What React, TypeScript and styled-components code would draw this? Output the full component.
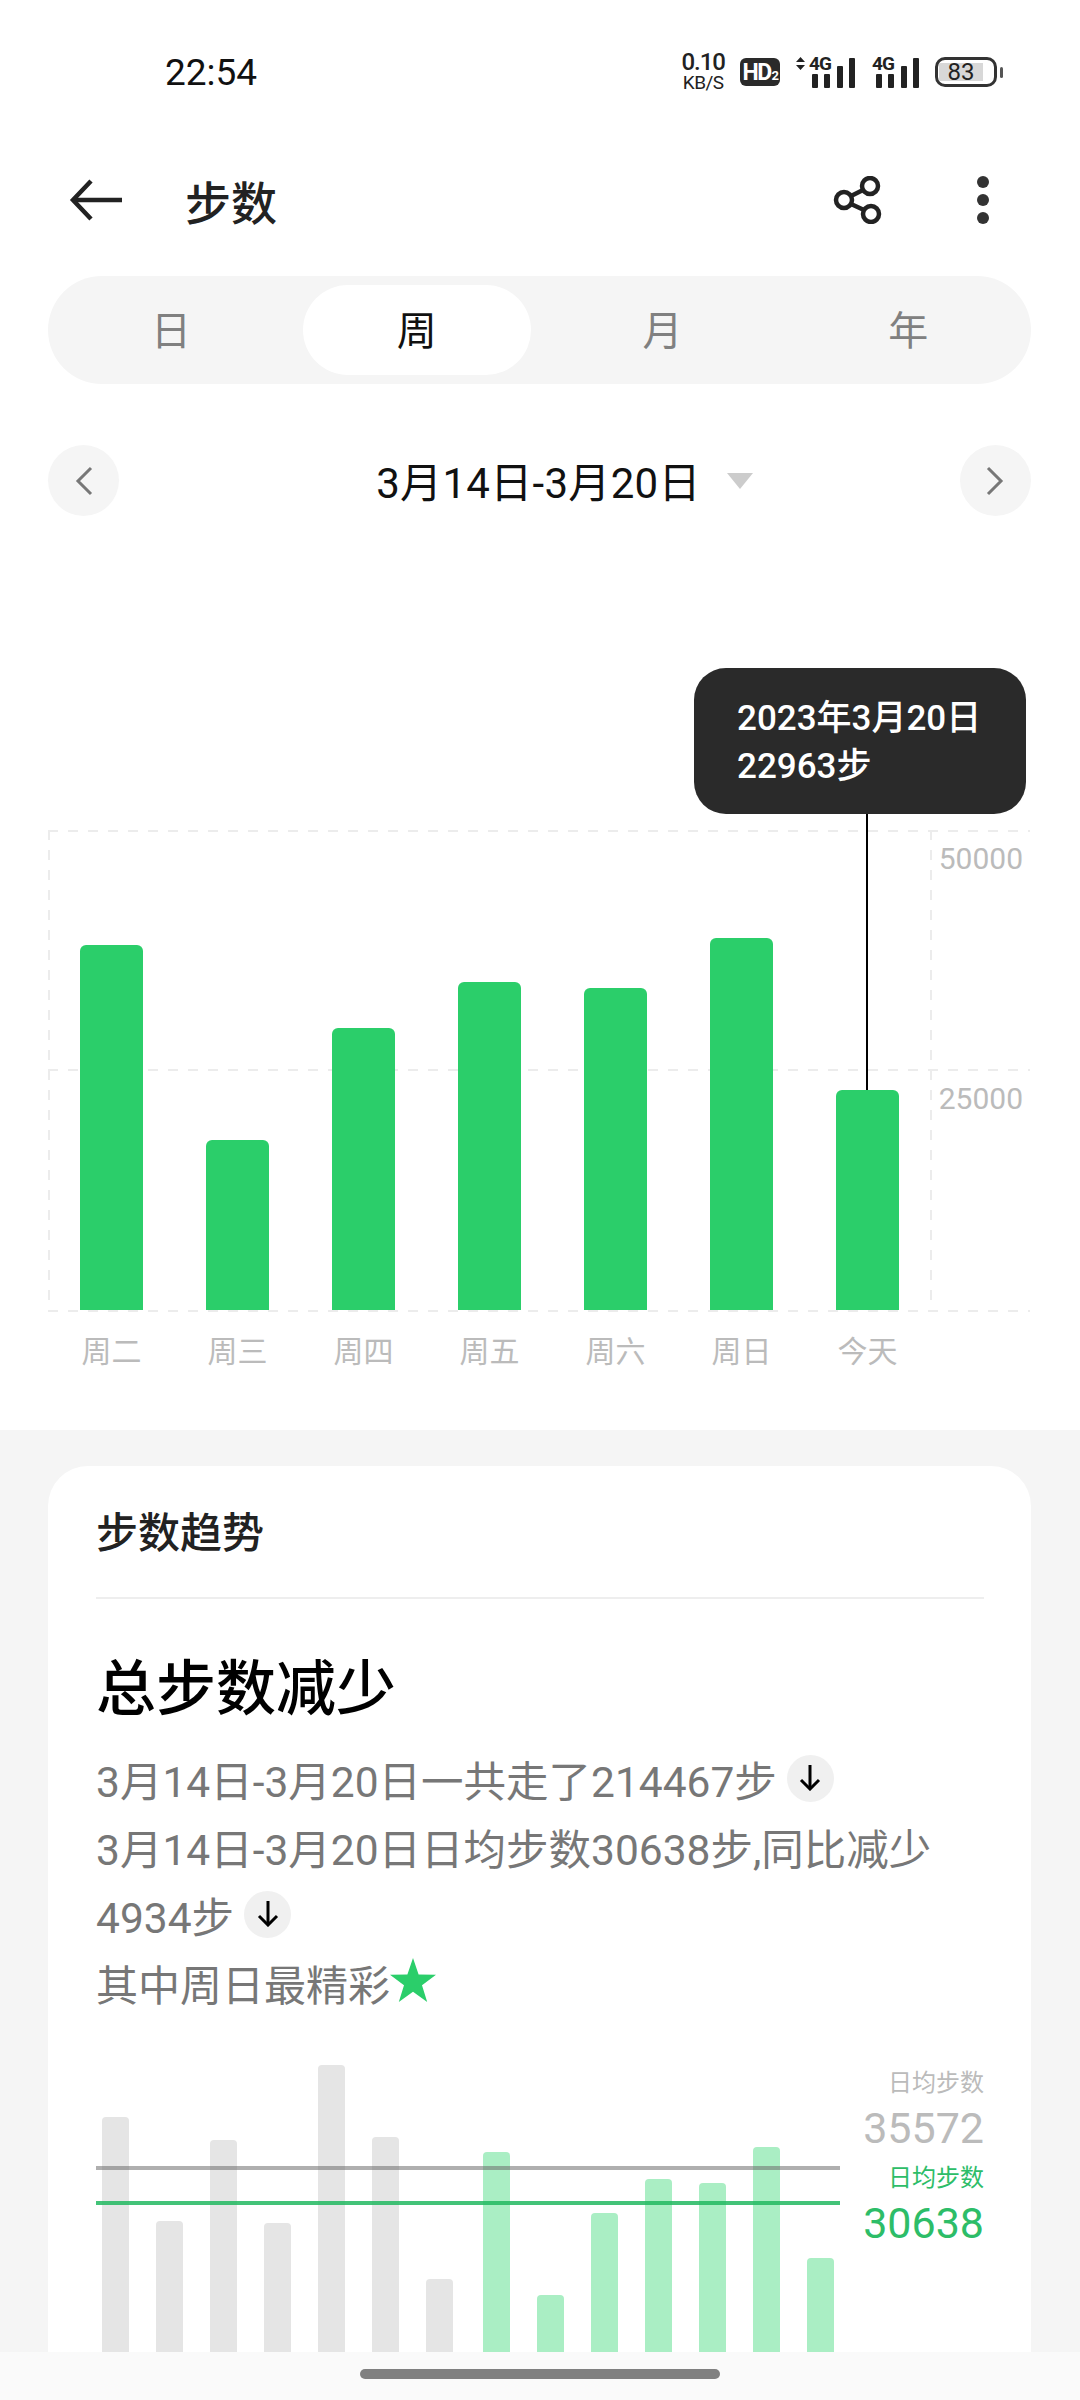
import styled, { createGlobalStyle } from "styled-components";

const GREEN = "#2bce6a";

const weekBars = [
  { label: "周二", height: 365 },
  { label: "周三", height: 170 },
  { label: "周四", height: 282 },
  { label: "周五", height: 328 },
  { label: "周六", height: 322 },
  { label: "周日", height: 372 },
  { label: "今天", height: 220 },
];
const lastWeek = [255, 151, 232, 149, 307, 235, 93];
const thisWeek = [220, 77, 159, 193, 189, 225, 114];

const SignalIcon = ({ arrows }: { arrows?: boolean }) => (
  <Signal $wide={arrows}>
    <svg width={arrows ? 62 : 48} height="32" viewBox={arrows ? "0 0 62 32" : "0 0 48 32"}>
      {arrows && <path d="M1 6 L5.5 1 L10 6 Z M1 9 L5.5 14 L10 9 Z" fill="#222" />}
      <g transform={arrows ? "translate(14 0)" : "translate(1 0)"}>
        <rect x="3" y="18" width="6" height="14" rx="1" fill="#222" />
        <rect x="15" y="18" width="6" height="14" rx="1" fill="#222" />
        <rect x="28" y="10" width="6" height="22" rx="1" fill="#222" />
        <rect x="40" y="2" width="6" height="30" rx="1" fill="#222" />
      </g>
    </svg>
    <SignalText $wide={arrows}>4G</SignalText>
  </Signal>
);

const BackIcon = () => (
  <svg width="54" height="42" viewBox="0 0 54 42" fill="none" stroke="#222" strokeWidth="4.5">
    <path d="M53 21 H4" />
    <path d="M22 2 L4 21 L22 40" />
  </svg>
);

const ShareIcon = () => (
  <svg width="52" height="48" viewBox="0 0 52 48" fill="none" stroke="#222" strokeWidth="4.5">
    <circle cx="38" cy="10" r="8" />
    <circle cx="12" cy="24" r="8" />
    <circle cx="39" cy="38" r="8" />
    <path d="M19 20 L31 14 M19 28 L32 34" />
  </svg>
);

const MoreIcon = () => (
  <svg width="14" height="50" viewBox="0 0 14 50" fill="#333">
    <circle cx="7" cy="7" r="6" />
    <circle cx="7" cy="25" r="6" />
    <circle cx="7" cy="43" r="6" />
  </svg>
);

const Chevron = ({ right }: { right?: boolean }) => (
  <svg width="18" height="30" viewBox="0 0 18 30" fill="none" stroke="#777" strokeWidth="3">
    <path d={right ? "M2 2 L15 15 L2 28" : "M16 2 L3 15 L16 28"} />
  </svg>
);

const DownArrow = () => (
  <svg width="22" height="26" viewBox="0 0 22 26" fill="none" stroke="#000" strokeWidth="3">
    <path d="M11 0 V24" />
    <path d="M2 15 L11 24 L20 15" />
  </svg>
);

const StarIcon = () => (
  <StarShape width="46" height="44" viewBox="0 0 46 44" fill={GREEN}>
    <path d="M23 0 L28.6 16.6 L46 16.8 L32 27.2 L37.2 44 L23 33.8 L8.8 44 L14 27.2 L0 16.8 L17.4 16.6 Z" />
  </StarShape>
);

const App = () => {
  return (
    <>
      <GlobalStyle />
      <Page>
        <StatusBar>
          <Clock>22:54</Clock>
          <StatusIcons>
            <NetSpeed>
              <b>0.10</b>
              <span>KB/S</span>
            </NetSpeed>
            <HdBadge>
              HD<small>2</small>
            </HdBadge>
            <SignalIcon arrows />
            <SignalIcon />
            <Battery>
              <BatteryLevel>83</BatteryLevel>
            </Battery>
          </StatusIcons>
        </StatusBar>

        <Header>
          <BackIcon />
          <Title>步数</Title>
          <HeaderActions>
            <ShareIcon />
            <MoreIcon />
          </HeaderActions>
        </Header>

        <Tabs>
          <Tab>日</Tab>
          <Tab $active>周</Tab>
          <Tab>月</Tab>
          <Tab>年</Tab>
        </Tabs>

        <DateRow>
          <RoundButton>
            <Chevron />
          </RoundButton>
          <DateLabel>
            3月14日-3月20日
            <Caret />
          </DateLabel>
          <RoundButton>
            <Chevron right />
          </RoundButton>
        </DateRow>

        <ChartSection>
          <Tooltip>
            2023年3月20日
            <br />
            22963步
          </Tooltip>
          <Plot>
            <HLine $at={0} />
            <HLine $at={239} />
            <HLine $at={480} />
            <VLine $left={0} />
            <VLine $left={882} />
            <AxisValue $at={10}>50000</AxisValue>
            <AxisValue $at={250}>25000</AxisValue>
            <Bars>
              {weekBars.map((bar, i) => (
                <Bar key={bar.label} style={{ height: bar.height }}>
                  {i === weekBars.length - 1 && <Pointer />}
                </Bar>
              ))}
            </Bars>
          </Plot>
          <DayLabels>
            {weekBars.map((bar) => (
              <DayLabel key={bar.label}>{bar.label}</DayLabel>
            ))}
          </DayLabels>
        </ChartSection>

        <GraySection>
          <Card>
            <CardTitle>步数趋势</CardTitle>
            <Heading>总步数减少</Heading>
            <Line>
              3月14日-3月20日一共走了214467步
              <ArrowChip>
                <DownArrow />
              </ArrowChip>
            </Line>
            <Line>3月14日-3月20日日均步数30638步,同比减少</Line>
            <Line>
              4934步
              <ArrowChip>
                <DownArrow />
              </ArrowChip>
            </Line>
            <PlainLine>
              其中周日最精彩
              <StarIcon />
            </PlainLine>

            <Compare>
              <ComparePlot>
                <BarGroup>
                  {lastWeek.map((h, i) => (
                    <SmallBar key={i} style={{ height: h }} />
                  ))}
                </BarGroup>
                <BarGroup>
                  {thisWeek.map((h, i) => (
                    <SmallBar key={i} $green style={{ height: h }} />
                  ))}
                </BarGroup>
                <AvgLine $at={114} />
                <AvgLine $at={149} $green />
              </ComparePlot>
              <Stats>
                <Stat>
                  <StatLabel>日均步数</StatLabel>
                  <StatValue>35572</StatValue>
                </Stat>
                <Stat $green>
                  <StatLabel>日均步数</StatLabel>
                  <StatValue>30638</StatValue>
                </Stat>
              </Stats>
            </Compare>
          </Card>
        </GraySection>

        <NavBar>
          <NavHandle />
        </NavBar>
      </Page>
    </>
  );
};

export default App;

const GlobalStyle = createGlobalStyle`
  body {
    margin: 0;
    background: #fff;
    font-family: Roboto, "Noto Sans CJK SC", sans-serif;
  }
`;

const Page = styled.div`
  position: relative;
  width: 1080px;
  height: 2400px;
  overflow: hidden;
  background: #fff;
`;

const StatusBar = styled.div`
  display: flex;
  justify-content: space-between;
  align-items: center;
  height: 144px;
  padding: 0 79px 0 165px;
  box-sizing: border-box;
`;

const Clock = styled.div`
  font-size: 37px;
  color: #111;
`;

const StatusIcons = styled.div`
  display: flex;
  align-items: center;
  gap: 15px;
`;

const NetSpeed = styled.div`
  display: flex;
  flex-direction: column;
  align-items: center;
  color: #222;

  > b {
    font-size: 24px;
    font-weight: 500;
    letter-spacing: -1px;
    line-height: 21px;
  }
  > span {
    font-size: 19px;
    line-height: 20px;
    letter-spacing: -0.5px;
  }
`;

const HdBadge = styled.div`
  display: flex;
  align-items: center;
  justify-content: center;
  width: 40px;
  height: 28px;
  border-radius: 6px;
  background: #2a2a2a;
  color: #fff;
  font-size: 23px;
  font-weight: 700;
  letter-spacing: -1.5px;

  > small {
    font-size: 13px;
    margin-top: 7px;
    margin-left: 1px;
  }
`;

const Signal = styled.div<{ $wide?: boolean }>`
  position: relative;
  display: flex;
  width: ${(p) => (p.$wide ? 62 : 48)}px;
  height: 32px;
`;

const SignalText = styled.span<{ $wide?: boolean }>`
  position: absolute;
  left: ${(p) => (p.$wide ? 14 : 0)}px;
  top: -2px;
  font-size: 19px;
  font-weight: 700;
  line-height: 20px;
  letter-spacing: -1px;
  color: #222;
`;

const Battery = styled.div`
  position: relative;
  width: 62px;
  height: 30px;
  box-sizing: border-box;
  border: 3px solid #333;
  border-radius: 10px;
  padding: 3px 11px 3px 1px;
  margin-right: 4px;

  &::after {
    content: "";
    position: absolute;
    right: -9px;
    top: 7px;
    width: 3px;
    height: 11px;
    background: #555;
    border-radius: 2px;
  }
`;

const BatteryLevel = styled.div`
  height: 100%;
  background: #d8d8d8;
  color: #222;
  font-size: 24px;
  line-height: 19px;
  text-align: center;
`;

const Header = styled.header`
  display: flex;
  align-items: center;
  height: 112px;
  padding: 0 90px 0 69px;
`;

const Title = styled.h1`
  margin: 0 0 0 62px;
  font-size: 46px;
  font-weight: 500;
  color: #222;
`;

const HeaderActions = styled.div`
  display: flex;
  align-items: center;
  gap: 92px;
  margin-left: auto;
`;

const Tabs = styled.div`
  display: grid;
  grid-template-columns: repeat(4, 1fr);
  height: 108px;
  margin: 20px 49px 0 48px;
  border-radius: 54px;
  background: #f5f5f5;
`;

const Tab = styled.div<{ $active?: boolean }>`
  display: flex;
  align-items: center;
  justify-content: center;
  margin: 9px;
  padding-bottom: 5px;
  border-radius: 45px;
  font-size: 40px;
  color: ${(p) => (p.$active ? "#111" : "#808080")};
  background: ${(p) => (p.$active ? "#fff" : "transparent")};
`;

const DateRow = styled.div`
  display: flex;
  align-items: center;
  justify-content: space-between;
  height: 71px;
  margin: 61px 49px 0 48px;
`;

const RoundButton = styled.div`
  display: flex;
  align-items: center;
  justify-content: center;
  width: 71px;
  height: 71px;
  border-radius: 50%;
  background: #f5f5f5;
`;

const DateLabel = styled.div`
  display: flex;
  align-items: center;
  gap: 26px;
  padding-bottom: 2px;
  font-size: 42px;
  letter-spacing: 0.3px;
  color: #111;
  margin-left: 50px;
`;

const Caret = styled.span`
  width: 0;
  height: 0;
  margin-top: 2px;
  border-left: 13px solid transparent;
  border-right: 13px solid transparent;
  border-top: 16px solid #ccc;
`;

const ChartSection = styled.section`
  position: relative;
  height: 914px;
  padding: 314px 50px 0 48px;
  box-sizing: border-box;
`;

const Tooltip = styled.div`
  position: absolute;
  z-index: 2;
  top: 152px;
  left: 694px;
  width: 332px;
  height: 146px;
  box-sizing: border-box;
  padding: 27px 0 0 43px;
  border-radius: 32px;
  background: #2a2a2a;
  color: #fff;
  font-size: 35px;
  font-weight: 500;
  line-height: 48px;
`;

const Plot = styled.div`
  position: relative;
  height: 480px;
`;

const HLine = styled.div<{ $at: number }>`
  position: absolute;
  left: 0;
  right: 0;
  top: ${(p) => p.$at}px;
  height: 2px;
  background: repeating-linear-gradient(90deg, #ececec 0 10px, transparent 10px 20px);
`;

const VLine = styled.div<{ $left: number }>`
  position: absolute;
  top: 0;
  bottom: 0;
  left: ${(p) => p.$left}px;
  width: 2px;
  background: repeating-linear-gradient(180deg, #ececec 0 10px, transparent 10px 20px);
`;

const AxisValue = styled.div<{ $at: number }>`
  position: absolute;
  right: 7px;
  top: ${(p) => p.$at}px;
  font-size: 30px;
  line-height: 38px;
  color: #bbb;
`;

const Bars = styled.div`
  position: absolute;
  inset: 0;
  display: flex;
  align-items: flex-end;
  gap: 63px;
  padding-left: 32px;
`;

const Bar = styled.div`
  position: relative;
  width: 63px;
  border-radius: 6px 6px 0 0;
  background: ${GREEN};
`;

const Pointer = styled.div`
  position: absolute;
  left: 30px;
  bottom: 100%;
  width: 2px;
  height: 277px;
  background: #000;
`;

const DayLabels = styled.div`
  display: flex;
  gap: 63px;
  padding: 22px 0 0 32px;
`;

const DayLabel = styled.div`
  width: 63px;
  white-space: nowrap;
  display: flex;
  justify-content: center;
  font-size: 30px;
  line-height: 40px;
  color: #bbb;
`;

const GraySection = styled.section`
  padding: 36px 49px 0 48px;
  height: 970px;
  background: #f5f5f5;
`;

const Card = styled.div`
  height: 1000px;
  padding: 0 47px 0 48px;
  border-radius: 40px 40px 0 0;
  background: #fff;
`;

const CardTitle = styled.h2`
  margin: 0;
  height: 131px;
  border-bottom: 2px solid #eee;
  font-size: 42px;
  font-weight: 500;
  line-height: 136px;
  color: #222;
`;

const Heading = styled.h3`
  margin: 46px 0 9px;
  font-size: 60px;
  font-weight: 500;
  line-height: 90px;
  color: #000;
`;

const Line = styled.div`
  display: flex;
  align-items: center;
  height: 68px;
  font-size: 42.5px;
  color: #777;
  white-space: nowrap;
`;

const PlainLine = styled(Line)`
  font-size: 42px;
`;

const ArrowChip = styled.span`
  display: flex;
  align-items: center;
  justify-content: center;
  width: 47px;
  height: 47px;
  margin-left: 10px;
  border-radius: 50%;
  background: #f0f0f0;
`;

const StarShape = styled.svg`
  margin-top: -4px;
`;

const Compare = styled.div`
  display: flex;
  justify-content: space-between;
  margin-top: 36px;
  height: 320px;
`;

const ComparePlot = styled.div`
  position: relative;
  display: flex;
  align-items: flex-end;
  gap: 30px;
  width: 744px;
  padding-left: 6px;
  box-sizing: border-box;
`;

const BarGroup = styled.div`
  display: flex;
  align-items: flex-end;
  gap: 27px;
`;

const SmallBar = styled.div<{ $green?: boolean }>`
  width: 27px;
  border-radius: 4px 4px 0 0;
  background: ${(p) => (p.$green ? "#aaeec4" : "#e5e5e5")};
`;

const AvgLine = styled.div<{ $at: number; $green?: boolean }>`
  position: absolute;
  left: 0;
  right: 0;
  top: ${(p) => p.$at}px;
  height: 4px;
  background: ${(p) => (p.$green ? "rgba(34, 184, 96, 0.85)" : "rgba(110, 110, 110, 0.55)")};
`;

const Stats = styled.div`
  display: flex;
  flex-direction: column;
  gap: 5px;
  padding-top: 13px;
`;

const Stat = styled.div<{ $green?: boolean }>`
  text-align: right;
  color: ${(p) => (p.$green ? "#2dbd68" : "#bbb")};
`;

const StatLabel = styled.div`
  font-size: 24px;
  line-height: 36px;
`;

const StatValue = styled.div`
  font-size: 43px;
  line-height: 54px;
`;

const NavBar = styled.div`
  position: absolute;
  left: 0;
  right: 0;
  bottom: 0;
  height: 48px;
  background: #fafafa;
`;

const NavHandle = styled.div`
  position: absolute;
  left: 360px;
  top: 17px;
  width: 360px;
  height: 10px;
  border-radius: 5px;
  background: #808080;
`;
